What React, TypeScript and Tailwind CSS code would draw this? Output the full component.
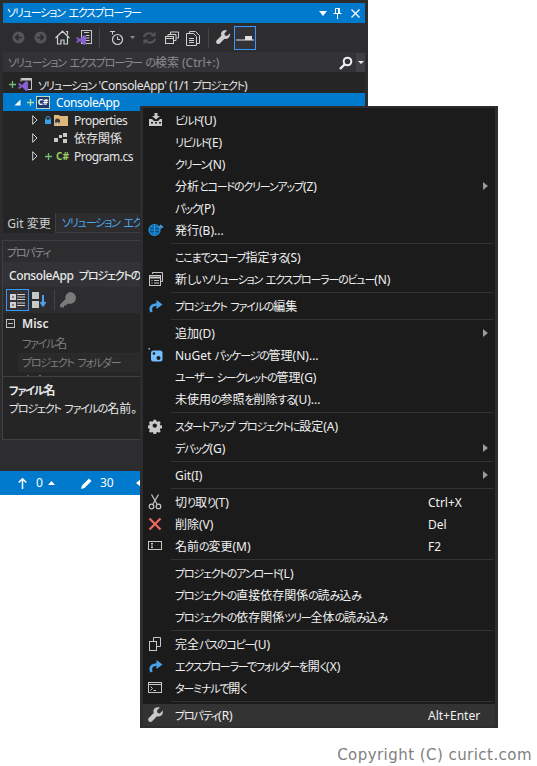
import React from "react";

const font = { fontFamily: '"Noto Sans", "Noto Sans CJK JP", sans-serif' };

function T({ children }: { children: string }) {
  const parts = children.match(/[\u3040-\u30ff]+(?: [\u3040-\u30ff]+)*|[^\u3040-\u30ff]+/g) ?? [];
  return (
    <>
      {parts.map((p, i) =>
        /^[\u3040-\u30ff]/.test(p) ? (
          <span key={i} className="text-[11px] tracking-[-1.2px] [word-spacing:2px]">{p}</span>
        ) : (
          <span key={i}>{p}</span>
        )
      )}
    </>
  );
}

const Chevron = () => (
  <svg width="5" height="8" viewBox="0 0 5 8" className="shrink-0"><path d="M0 0l5 4-5 4z" fill="#9a9a9a" /></svg>
);

const Redo = ({ color = "#4aa3ea" }: { color?: string }) => (
  <svg width="16" height="16" viewBox="0 0 16 16">
    <path d="M3.500 14C1.500 10 3.500 6.500 9 6.500" fill="none" stroke={color} strokeWidth="2.600" />
    <path d="M8.500 2l6 4.500-6 4.500z" fill={color} />
  </svg>
);

const icons: Record<string, React.ReactNode> = {
  build: (
    <svg width="16" height="16" viewBox="0 0 16 16" fill="#c8c8c8">
      <path d="M6.500 1h3v3H12L8 7.500 4 4h2.500z" />
      <path d="M1 7h3l2 2h4l2-2h2v7H1z" />
      <g fill="#1b1b1c"><rect x="3" y="10" width="2" height="1.500" /><rect x="7" y="10" width="2" height="1.500" /><rect x="11" y="10" width="2" height="1.500" /></g>
    </svg>
  ),
  publish: (
    <svg width="16" height="16" viewBox="0 0 16 16" fill="none" stroke="#1c97ea" strokeWidth="1.200">
      <circle cx="6.500" cy="8" r="5.500" fill="#0e4f7c" />
      <path d="M1 8h11M6.500 2.500v11M3 5h7M3 11h7" />
      <path d="M11 6c1-2 2.500-2.500 3.500-1M12 3l2.500 2-2.500 1.500" stroke="#4aa3ea" />
    </svg>
  ),
  view: (
    <svg width="16" height="16" viewBox="0 0 16 16" fill="none" stroke="#c8c8c8">
      <path d="M4.500 3V1.500h10v9H13" />
      <rect x="1.500" y="4.500" width="11" height="10" />
      <path d="M1.500 6.500h11" strokeWidth="2" />
      <path d="M3.500 9.500h1M6 9.500h5M3.500 12h1M6 12h5" />
    </svg>
  ),
  redo: <Redo />,
  nuget: (
    <svg width="16" height="16" viewBox="0 0 16 16">
      <rect x="0.500" y="1" width="1.500" height="1.500" fill="#75beff" />
      <rect x="3" y="3.500" width="11.500" height="11" rx="2.500" fill="#75beff" />
      <circle cx="6" cy="6.500" r="1.300" fill="#1b1b1c" />
      <circle cx="10.500" cy="11" r="2" fill="#1b1b1c" />
    </svg>
  ),
  gear: (
    <svg width="16" height="16" viewBox="0 0 16 16">
      <path d="M6.500 1h3l.4 2 1.400.6 1.700-1.100 2 2-1.100 1.700.6 1.400 2 .4v3l-2 .4-.6 1.400 1.100 1.700-2 2-1.700-1.100-1.400.6-.4 2h-3l-.4-2-1.400-.6-1.700 1.100-2-2 1.100-1.700-.6-1.400-2-.4v-3l2-.4.6-1.400-1.100-1.700 2-2 1.700 1.100 1.400-.6z" fill="#c8c8c8" transform="translate(0 0.800) scale(0.85)" />
      <circle cx="6.800" cy="7.600" r="2.200" fill="#1b1b1c" />
    </svg>
  ),
  cut: (
    <svg width="16" height="16" viewBox="0 0 16 16" fill="none" stroke="#c8c8c8" strokeWidth="1.200">
      <path d="M3.500 0.500L9 10M10.500 0.500L5 10" />
      <circle cx="3.500" cy="12.500" r="2.300" />
      <circle cx="10.500" cy="12.500" r="2.300" />
    </svg>
  ),
  del: (
    <svg width="16" height="16" viewBox="0 0 16 16"><path d="M1.500 2.500l11 11M12.500 2.500l-11 11" stroke="#f1675f" strokeWidth="2.200" /></svg>
  ),
  rename: (
    <svg width="16" height="16" viewBox="0 0 16 16" fill="none" stroke="#c8c8c8">
      <rect x="0.500" y="3.500" width="13" height="8" />
      <path d="M3 5.500h2M3 9.500h2M4 5.500v4" />
    </svg>
  ),
  copy: (
    <svg width="16" height="16" viewBox="0 0 16 16" fill="none" stroke="#c8c8c8">
      <rect x="1.500" y="5.500" width="7" height="9" />
      <path d="M5.500 5V1.500h7v9H9" />
    </svg>
  ),
  term: (
    <svg width="16" height="16" viewBox="0 0 16 16" fill="none" stroke="#c8c8c8">
      <rect x="0.500" y="2.500" width="13" height="10" />
      <path d="M0.500 4.500h13" />
      <path d="M2.500 6.500l2 2-2 2M5.500 10.500h2.500" />
    </svg>
  ),
  wrench: (
    <svg width="16" height="16" viewBox="0 0 16 16"><path d="M14.800 3.500l-3 3-2.300-.6-.6-2.300 3-3C9.500-.2 7 .5 6 2.200 5.200 3.500 5.300 4.900 5.700 6L.8 11c-.9 1-.9 2.400 0 3.300s2.300.9 3.300 0L9 9.300c1.400.5 3 .3 4.200-.7 1.400-1.200 2-3.300 1.600-5.100z" fill="#c8c8c8" /></svg>
  ),
};

type Row = { t: string; i?: string; s?: string; sub?: boolean; hl?: boolean } | "-";
const rows: Row[] = [
  { t: "ビルド(U)", i: "build" },
  { t: "リビルド(E)" },
  { t: "クリーン(N)" },
  { t: "分析とコードのクリーンアップ(Z)", sub: true },
  { t: "パック(P)" },
  { t: "発行(B)...", i: "publish" },
  "-",
  { t: "ここまでスコープ指定する(S)" },
  { t: "新しいソリューション エクスプローラーのビュー(N)", i: "view" },
  "-",
  { t: "プロジェクト ファイルの編集", i: "redo" },
  "-",
  { t: "追加(D)", sub: true },
  { t: "NuGet パッケージの管理(N)...", i: "nuget" },
  { t: "ユーザー シークレットの管理(G)" },
  { t: "未使用の参照を削除する(U)..." },
  "-",
  { t: "スタートアップ プロジェクトに設定(A)", i: "gear" },
  { t: "デバッグ(G)", sub: true },
  "-",
  { t: "Git(I)", sub: true },
  "-",
  { t: "切り取り(T)", i: "cut", s: "Ctrl+X" },
  { t: "削除(V)", i: "del", s: "Del" },
  { t: "名前の変更(M)", i: "rename", s: "F2" },
  "-",
  { t: "プロジェクトのアンロード(L)" },
  { t: "プロジェクトの直接依存関係の読み込み" },
  { t: "プロジェクトの依存関係ツリー全体の読み込み" },
  "-",
  { t: "完全パスのコピー(U)", i: "copy" },
  { t: "エクスプローラーでフォルダーを開く(X)", i: "redo" },
  { t: "ターミナルで開く", i: "term" },
  "-",
  { t: "プロパティ(R)", i: "wrench", s: "Alt+Enter", hl: true },
];

function Menu() {
  return (
    <div className="absolute left-[140px] top-[106px] w-[358px] border-x-[3px] border-t-[2px] border-b-[2px] border-[#2d2d30] bg-[#1b1b1c] pt-px text-[12px] text-[#f1f1f1]">
      {rows.map((r, i) =>
        r === "-" ? (
          <div key={i} className="flex h-[5px] items-center pl-[28px] pr-[2px]">
            <div className="h-px w-full bg-[#333337]" />
          </div>
        ) : (
          <div key={i} className={`flex h-[22px] items-center ${r.hl ? "bg-[#333334]" : ""}`}>
            <div className="flex w-[32px] shrink-0 justify-start pl-[5px]">{r.i ? icons[r.i] : null}</div>
            <div className="whitespace-nowrap pt-[2px]"><T>{r.t}</T></div>
            {r.s ? <div className="absolute left-[285px] whitespace-nowrap pt-[2px]">{r.s}</div> : null}
            {r.sub ? <div className="ml-auto pr-[7px]"><Chevron /></div> : null}
          </div>
        )
      )}
    </div>
  );
}

const Dots = ({ c }: { c: string }) => (
  <div
    className="mx-2 h-[6px] flex-1"
    style={{ backgroundImage: `radial-gradient(${c} 0.6px, transparent 0.7px)`, backgroundSize: "4px 2px" }}
  />
);

const Plus = ({ c = "#6fbf73" }: { c?: string }) => (
  <svg width="7" height="7" viewBox="0 0 7 7"><path d="M3.500 0v7M0 3.500h7" stroke={c} strokeWidth="1.300" /></svg>
);

const VsLogo = () => (
  <svg width="10" height="10" viewBox="0 0 10 10"><path d="M0 3l1.500-1L4 4l4-4 2 1v8l-2 1-4-4-2.500 2L0 7l2-2z" fill="#8a5fd1" /></svg>
);

function Toolbar() {
  return (
    <div className="flex h-[29px] items-center bg-[#2d2d30] pl-[9px]">
      <svg width="13" height="13" viewBox="0 0 14 14" className="mr-[9px]"><circle cx="7" cy="7" r="6.500" fill="#555558" /><path d="M10.500 7H4.500M7 4L4 7l3 3" stroke="#2d2d30" strokeWidth="1.800" fill="none" /></svg>
      <svg width="13" height="13" viewBox="0 0 14 14" className="mr-[8px]"><circle cx="7" cy="7" r="6.500" fill="#555558" /><path d="M3.500 7h6M7 4l3 3-3 3" stroke="#2d2d30" strokeWidth="1.800" fill="none" /></svg>
      <svg width="15" height="15" viewBox="0 0 15 15" fill="none" stroke="#d0d0d0" className="mr-[6px]"><path d="M.5 8L7.500 1.200 14.500 8M2.500 6.500v7.500h3.500v-4h3v4h3.500v-7.500M11 1.500h1.500v3" strokeWidth="1.200" /></svg>
      <svg width="16" height="15" viewBox="0 0 16 15" className="mr-[7px]"><rect x="5.500" y="0.500" width="10" height="13" fill="#2d2d30" stroke="#c8c8c8" /><path d="M8 2.500h5M10 5.500h3.500M10 8h3.500M10 10.500h3.500" stroke="#c8c8c8" /><g transform="translate(0 5)"><VsLogo /></g></svg>
      <div className="mr-[9px] h-[20px] w-px bg-[#46464a]" />
      <svg width="16" height="16" viewBox="0 0 16 16" fill="none" stroke="#d0d0d0" className="mr-[5px]"><path d="M1 1.500h5M3.500 1.500v3" /><circle cx="8.500" cy="9.500" r="5" strokeWidth="1.200" /><path d="M8.500 6.500v3h2.500" /></svg>
      <svg width="5" height="3" viewBox="0 0 5 3" className="mr-[7px]"><path d="M0 0h5L2.500 3z" fill="#8a8a8a" /></svg>
      <svg width="15" height="14" viewBox="0 0 16 14" fill="none" stroke="#555558" strokeWidth="2.200" className="mr-[8px]"><path d="M2 6c1-3 3-4 6-4 2 0 3 1 4 2M14 8c-1 3-3 4-6 4-2 0-3-1-4-2" /><path d="M14.500 0v5.500h-5.500L14.500 0zM1.500 14V8.500h5.500z" fill="#555558" stroke="none" /></svg>
      <svg width="14" height="13" viewBox="0 0 14 13" fill="none" stroke="#d0d0d0" className="mr-[7px]"><rect x="0.500" y="5.500" width="8" height="7" /><path d="M0.500 7.500h8" /><path d="M3 5V3.500h8v6H9M5.500 3V1h8v6H11.500" /></svg>
      <svg width="15" height="16" viewBox="0 0 15 16" fill="none" stroke="#d0d0d0" className="mr-[7px]"><path d="M3.500 3.500V1.500h6l4 4v8H10" /><path d="M.5 3.500h7l3 3v9H.5z" fill="#2d2d30" /><path d="M3 8.500h5M3 10.500h5M3 12.500h5" /></svg>
      <div className="mr-[7px] h-[20px] w-px bg-[#46464a]" />
      <svg width="15" height="15" viewBox="0 0 16 16" className="mr-[3px]"><path d="M14.800 3.500l-3 3-2.300-.6-.6-2.300 3-3C9.500-.2 7 .5 6 2.200 5.200 3.500 5.300 4.900 5.700 6L.8 11c-.9 1-.9 2.400 0 3.300s2.300.9 3.300 0L9 9.300c1.400.5 3 .3 4.200-.7 1.400-1.200 2-3.300 1.600-5.100z" fill="#d0d0d0" /></svg>
      <div className="flex h-[24px] w-[22px] items-center justify-center border border-[#3399ff] bg-[#333337]">
        <svg width="18" height="6" viewBox="0 0 18 6"><path d="M0 5h18" stroke="#e0e0e0" /><path d="M9 1h7v4H9z" fill="#e0e0e0" /></svg>
      </div>
    </div>
  );
}

function TreeRow({ children, sel, pl, h = "h-[18px]" }: { children: React.ReactNode; sel?: boolean; pl: number; h?: string }) {
  return (
    <div className={`flex ${h} items-center whitespace-nowrap ${sel ? "bg-[#007acc] text-white" : ""}`} style={{ paddingLeft: pl }}>
      {children}
    </div>
  );
}

const TreeTri = () => (
  <svg width="6" height="10" viewBox="0 0 6 10" className="mr-[7px] shrink-0"><path d="M.7.7L5 5 .7 9.300z" fill="none" stroke="#d0d0d0" /></svg>
);

function Tree() {
  return (
    <div className="h-[141px] bg-[#252526] pt-[4px]">
      <TreeRow pl={6} h="h-[17px]">
        <span className="mr-[2px]"><Plus /></span>
        <svg width="14" height="13" viewBox="0 0 14 13" className="mr-[6px]"><path d="M3 3.500V.5h10.500v11H7" fill="none" stroke="#c8c8c8" /><path d="M3.500 .5h10v2h-10z" fill="#c8c8c8" /><g transform="translate(0 3)"><VsLogo /></g></svg>
        <span className="pt-[2px] tracking-[-0.4px]"><T>ソリューション 'ConsoleApp' (1/1 プロジェクト)</T></span>
      </TreeRow>
      <TreeRow pl={11} sel>
        <svg width="7" height="7" viewBox="0 0 7 7" className="mr-[6px]"><path d="M6.500.5v6h-6z" fill="#fff" /></svg>
        <span className="mr-[2px]"><Plus c="#a8e0a8" /></span>
        <span className="mr-[6px] flex h-[13px] w-[14px] items-center justify-center border border-[#b8d8c8] bg-[#1e3a6e] text-[8px] font-bold leading-none text-white">C#</span>
        <span className="pt-[2px] tracking-[-0.4px]">ConsoleApp</span>
      </TreeRow>
      <TreeRow pl={29}>
        <TreeTri />
        <svg width="6" height="8" viewBox="0 0 6 8" className="mr-[3px]"><path d="M1 4V2.500a2 2 0 014 0V4" stroke="#3ba0e8" fill="none" /><rect y="3.500" width="6" height="4.500" fill="#3ba0e8" /></svg>
        <svg width="14" height="13" viewBox="0 0 14 13" className="mr-[6px]"><path d="M0 1h5l1 1h8v10H0z" fill="#dcb67a" /><circle cx="3.500" cy="7" r="2.500" fill="#3a3a3a" /><path d="M3.500 8v4" stroke="#c8c8c8" strokeWidth="1.500" /></svg>
        <span className="pt-[2px] tracking-[-0.5px]">Properties</span>
      </TreeRow>
      <TreeRow pl={29}>
        <TreeTri />
        <svg width="14" height="10" viewBox="0 0 14 10" className="ml-[9px] mr-[6px]" fill="#c8c8c8"><rect x="0" y="5" width="4" height="4" /><rect x="5" y="2" width="3" height="3" /><rect x="9" y="0" width="4" height="4" /><rect x="9" y="6" width="4" height="4" /></svg>
        <span className="pt-[2px]">依存関係</span>
      </TreeRow>
      <TreeRow pl={29}>
        <TreeTri />
        <span className="mr-[4px]"><Plus /></span>
        <span className="mr-[6px] w-[12px] text-[10px] font-bold leading-none text-[#9ccc65]">C#</span>
        <span className="pt-[2px] tracking-[-0.5px]">Program.cs</span>
      </TreeRow>
    </div>
  );
}

function Properties() {
  return (
    <div className="ml-[2px] mr-[3px] mt-[7px] h-[200px] overflow-hidden border border-[#3f3f46] bg-[#252526]">
      <div className="flex h-[21px] items-center bg-[#2d2d30] pl-[4px] pt-[2px] text-[#8d8d8d]">
        <span className="whitespace-nowrap"><T>プロパティ</T></span>
        <Dots c="#46464a" />
      </div>
      <div className="flex h-[25px] items-center whitespace-nowrap bg-[#333337] pl-[6px] pt-[2px] font-medium tracking-[-0.4px] text-[#e8e8e8]">
        <span><T>{"ConsoleApp\u00a0\u00a0プロジェクトのプロパティ"}</T></span>
      </div>
      <div className="flex h-[26px] items-center bg-[#2d2d30] pl-[3px]">
        <div className="flex h-[22px] w-[23px] items-center justify-center border border-[#3399ff] bg-[#333337]">
          <svg width="16" height="15" viewBox="0 0 16 15" fill="none" stroke="#d0d0d0"><rect x="0.500" y="1.500" width="5" height="5" fill="#d0d0d0" /><rect x="0.500" y="9.500" width="5" height="5" fill="#d0d0d0" /><path d="M7 1.500h8M7 4h8M7 6.500h8M7 10h8M7 12.500h8" /><path d="M2 4h2M2 12h2" stroke="#333337" /></svg>
        </div>
        <svg width="15" height="16" viewBox="0 0 15 16" className="ml-[3px]"><rect width="7" height="7" fill="#c8c8c8" /><rect y="9" width="7" height="7" fill="#c8c8c8" /><path d="M11 3v10M8.500 10l2.500 3.500 2.500-3.500" stroke="#4aa3ea" strokeWidth="2" fill="none" /></svg>
        <div className="ml-[7px] mr-[4px] h-[20px] w-px bg-[#46464a]" />
        <svg width="18" height="18" viewBox="0 0 18 18"><path d="M11 1a6 6 0 016 6 6 6 0 01-8 5.500L7 14.500H5v2H2L1 15.500v-2l5.500-5.500A6 6 0 0111 1z" fill="#7a7a7a" /></svg>
      </div>
      <div className="h-[63px] overflow-hidden">
        <div className="flex h-[21px] items-center pl-[3px] font-semibold text-[#e8e8e8]">
          <svg width="9" height="9" viewBox="0 0 9 9" className="mr-[7px]"><rect x="0.500" y="0.500" width="8" height="8" fill="none" stroke="#c0c0c0" /><path d="M2 4.500h5" stroke="#c0c0c0" /></svg>
          Misc
        </div>
        <div className="ml-[15px] flex h-[19px] items-center pl-[4px] text-[#7e7e7e]"><span><T>ファイル名</T></span></div>
        <div className="ml-[15px] flex h-[19px] items-center border-y border-[#2d2d30] bg-[#2a2a2b] pl-[4px] text-[#7e7e7e]"><span><T>プロジェクト フォルダー</T></span></div>
        <div className="ml-[15px] flex h-[19px] items-center pl-[4px] text-[#7e7e7e]"><span><T>完全パス</T></span></div>
      </div>
      <div className="border-t border-[#3f3f46] pl-[6px] pt-[4px] text-[#e8e8e8]">
        <div className="flex h-[18px] items-center pt-[2px] font-semibold"><span><T>ファイル名</T></span></div>
        <div className="flex h-[18px] items-center pt-[2px]"><span><T>プロジェクト ファイルの名前。</T></span></div>
      </div>
    </div>
  );
}

export default function App() {
  return (
    <div className="relative h-[766px] w-[537px] overflow-hidden bg-white text-[12px] [font-feature-settings:'palt']" style={font}>
      <div className="flex h-[495px] w-[368px] flex-col bg-[#2d2d30] text-[#e4e4e4]">
        <div className="px-[3px] pt-[3px]">
          <div className="flex h-[20px] items-center bg-[#007acc] pl-[4px] pr-[5px] text-white">
            <span className="whitespace-nowrap"><T>ソリューション エクスプローラー</T></span>
            <Dots c="#5aa9dd" />
            <svg width="8" height="5" viewBox="0 0 8 5" className="mr-[6px]"><path d="M0 0h8L4 5z" fill="#fff" /></svg>
            <svg width="9" height="11" viewBox="0 0 9 11" className="mr-[9px]"><path d="M2.500.5h4v5h-4zM4.500 5.500V11M.5 5.500h8" stroke="#fff" fill="none" /><path d="M5 .5h1.500v5H5z" fill="#fff" /></svg>
            <svg width="9" height="9" viewBox="0 0 9 9"><path d="M.5.5l8 8M8.500.5l-8 8" stroke="#fff" strokeWidth="1.300" /></svg>
          </div>
          <Toolbar />
          <div className="flex h-[20px] items-center bg-[#333337] pl-[5px] pt-px text-[#8b8b8b]">
            <span className="whitespace-nowrap"><T>ソリューション エクスプローラー の検索 (Ctrl+:)</T></span>
            <div className="ml-auto flex h-full items-center">
              <svg width="14" height="14" viewBox="0 0 14 14" className="mr-[3px]"><circle cx="8.500" cy="5.500" r="3.800" fill="none" stroke="#f0f0f0" strokeWidth="2" /><path d="M5.500 8.500L1 13" stroke="#f0f0f0" strokeWidth="2.400" /></svg>
              <div className="flex h-full w-[9px] items-center justify-center bg-[#3f3f46]">
                <svg width="6" height="3" viewBox="0 0 6 3"><path d="M0 0h6L3 3z" fill="#e8e8e8" /></svg>
              </div>
            </div>
          </div>
          <Tree />
          <div className="flex h-[20px] items-end bg-[#2d2d30]">
            <div className="flex h-[20px] w-[53px] items-center justify-center border-r border-[#3f3f46] bg-[#252526] pt-px text-[#d0d0d0]">Git 変更</div>
            <div className="flex h-[20px] flex-1 items-center overflow-hidden whitespace-nowrap border-b border-[#3f3f46] pl-[6px] pt-px text-[#4ea6ea]"><span><T>ソリューション エクスプローラー</T></span></div>
          </div>
        </div>
        <Properties />
        <div className="mt-auto flex h-[24px] items-center bg-[#007acc] pl-[18px] text-white">
          <svg width="9" height="11" viewBox="0 0 9 11" className="mr-[9px]"><path d="M4.500 11V1M.7 4.500L4.500.8l3.800 3.700" fill="none" stroke="#fff" strokeWidth="1.500" /></svg>
          <span>0</span>
          <svg width="7" height="4" viewBox="0 0 7 4" className="ml-[5px] mr-[26px]"><path d="M0 4h7L3.500 0z" fill="#fff" /></svg>
          <svg width="11" height="11" viewBox="0 0 11 11" className="mr-[8px]"><path d="M0 11l1-3.500L8 .5 10.500 3l-7 7z" fill="#fff" /></svg>
          <span>30</span>
          <svg width="5" height="8" viewBox="0 0 5 8" className="ml-[22px]"><path d="M5 0v8L0 4z" fill="#fff" /></svg>
        </div>
      </div>
      <Menu />
      <div className="absolute right-[5px] top-[744px] whitespace-nowrap text-[15px] tracking-[0.45px] text-[#808080]" style={{ fontFamily: '"DejaVu Sans", sans-serif' }}>Copyright (C) curict.com</div>
    </div>
  );
}
